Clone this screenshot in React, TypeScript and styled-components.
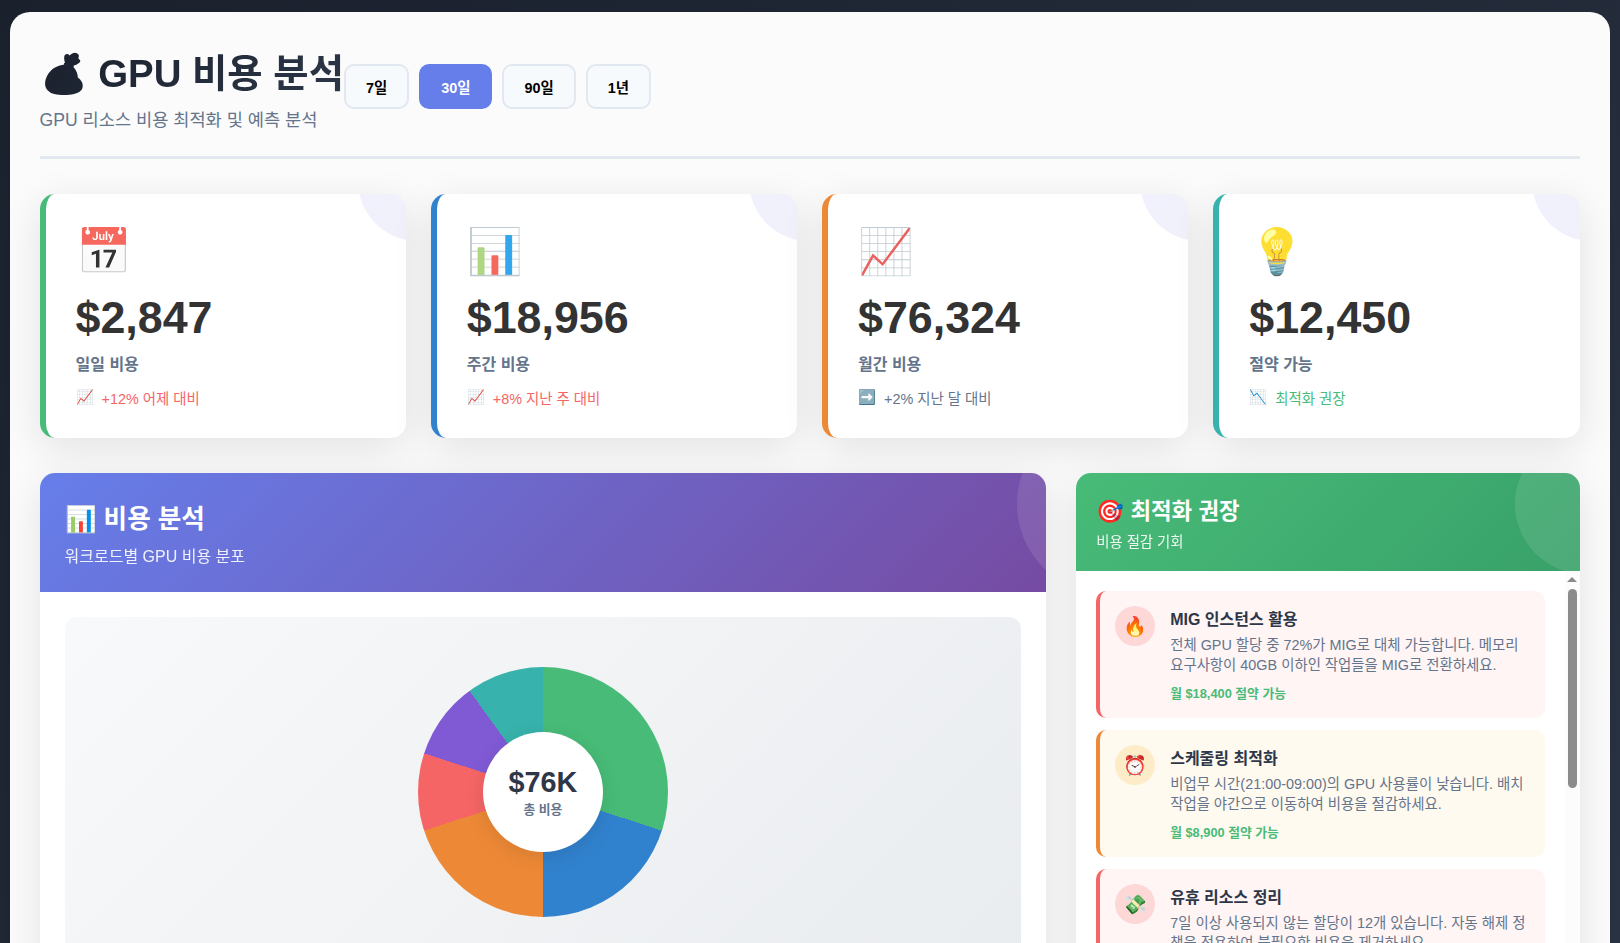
import React from "react";
import styled, { createGlobalStyle, css } from "styled-components";

const GlobalStyle = createGlobalStyle`
  * { margin: 0; padding: 0; box-sizing: border-box; }
  html, body { height: 943px; overflow: hidden; }
  body {
    font-family: "Liberation Sans", "Noto Sans CJK KR", sans-serif;
    color: #333;
    background: linear-gradient(135deg, #1a202c 0%, #2d3748 100%) 0 0 / 1620px 1600px no-repeat;
  }
`;

const Page = styled.main`
  width: 1600px;
  height: 1400px;
  margin: 12px 0 0 9.5px;
  padding: 30px;
  border-radius: 20px;
  background: #fbfbfb;
`;

const Header = styled.header`
  display: flex;
  align-items: center;
  height: 117px;
  padding-bottom: 26px;
  margin-bottom: 35px;
  border-bottom: 3px solid #e2e8f0;
`;

const Heading = styled.div`
  padding-top: 7px;
`;

const Title = styled.h1`
  font-size: 38.4px;
  line-height: 55px;
  font-weight: 700;
  color: transparent;
  background: linear-gradient(135deg, #1a202c, #2d3748);
  background-clip: text;
  -webkit-background-clip: text;
`;

const Subtitle = styled.p`
  margin-top: 6px;
  font-size: 17.6px;
  line-height: 26px;
  color: #64748b;
`;

const Periods = styled.nav`
  display: flex;
  gap: 10px;
`;

const PeriodButton = styled.button<{ $active?: boolean }>`
  padding: 10px 20px;
  border: 2px solid ${(p) => (p.$active ? "#667eea" : "#e2e8f0")};
  border-radius: 10px;
  background: ${(p) => (p.$active ? "#667eea" : "#f7fafc")};
  color: ${(p) => (p.$active ? "#fff" : "#000")};
  font-family: inherit;
  font-size: 14.4px;
  font-weight: 600;
`;

const Stats = styled.section`
  display: grid;
  grid-template-columns: repeat(4, 1fr);
  gap: 25px;
  margin-bottom: 35px;
`;

const StatCard = styled.article<{ $accent: string }>`
  position: relative;
  overflow: hidden;
  height: 244px;
  padding: 30px;
  border-left: 6px solid ${(p) => p.$accent};
  border-radius: 15px;
  background: #fff;
  box-shadow: 0 10px 40px rgba(0, 0, 0, 0.1);
  &::before {
    content: "";
    position: absolute;
    top: -30%;
    right: -20%;
    width: 120px;
    height: 120px;
    border-radius: 50%;
    background: linear-gradient(135deg, #667eea, #7462d0);
    opacity: 0.1;
  }
`;

const StatIcon = styled.div`
  font-size: 44.8px;
  line-height: 54px;
  margin-bottom: 14px;
  opacity: 0.8;
`;

const StatValue = styled.div`
  font-size: 44.8px;
  line-height: 51px;
  font-weight: 700;
  margin-bottom: 10px;
`;

const StatLabel = styled.div`
  font-size: 16px;
  line-height: 23px;
  font-weight: 600;
  color: #64748b;
  margin-bottom: 13px;
`;

const StatTrend = styled.div<{ $color: string }>`
  display: flex;
  align-items: center;
  gap: 8px;
  height: 21px;
  font-size: 14.4px;
  line-height: 21px;
  color: ${(p) => p.$color};
`;

const TrendMark = styled.span`
  margin-bottom: 4px;
`;

const Columns = styled.section`
  display: grid;
  grid-template-columns: 2fr 1fr;
  gap: 30px;
`;

const Panel = styled.section`
  overflow: hidden;
  height: 800px;
  border-radius: 15px;
  background: #fff;
  box-shadow: 0 10px 40px rgba(0, 0, 0, 0.1);
`;

const PanelHeader = styled.header<{ $compact?: boolean }>`
  position: relative;
  overflow: hidden;
  color: #fff;
  ${(p) =>
    p.$compact
      ? css`height: 98px; padding: 22px 20px 0; background: linear-gradient(135deg, #48bb78, #38a169);`
      : css`height: 119px; padding: 27px 25px 0; background: linear-gradient(135deg, #667eea, #764ba2);`}
  &::before {
    content: "";
    position: absolute;
    top: ${(p) => (p.$compact ? "-40%" : "-50%")};
    right: -15%;
    width: ${(p) => (p.$compact ? 140 : 180)}px;
    height: ${(p) => (p.$compact ? 140 : 180)}px;
    border-radius: 50%;
    background: rgba(255, 255, 255, 0.1);
  }
`;

const PanelTitle = styled.h2<{ $compact?: boolean }>`
  font-size: ${(p) => (p.$compact ? "22.4px" : "25.6px")};
  line-height: ${(p) => (p.$compact ? "33px" : "38px")};
  margin-bottom: ${(p) => (p.$compact ? "4px" : "7px")};
  font-weight: 700;
`;

const PanelNote = styled.p<{ $compact?: boolean }>`
  font-size: ${(p) => (p.$compact ? "14.4px" : "16px")};
  line-height: ${(p) => (p.$compact ? "21px" : "23px")};
  opacity: 0.9;
`;

const ChartArea = styled.div`
  display: flex;
  align-items: center;
  justify-content: center;
  height: 350px;
  margin: 25px;
  border-radius: 12px;
  background: linear-gradient(135deg, #f8f9fa, #e9ecef);
`;

const Donut = styled.div`
  display: flex;
  align-items: center;
  justify-content: center;
  width: 250px;
  height: 250px;
  border-radius: 50%;
  background: conic-gradient(
    #48bb78 0deg 108deg,
    #3182ce 108deg 180deg,
    #ed8936 180deg 252deg,
    #f56565 252deg 288deg,
    #805ad5 288deg 324deg,
    #38b2ac 324deg 360deg
  );
`;

const DonutHole = styled.div`
  display: flex;
  flex-direction: column;
  align-items: center;
  justify-content: center;
  width: 120px;
  height: 120px;
  padding-top: 2px;
  border-radius: 50%;
  background: #fff;
  box-shadow: 0 5px 20px rgba(0, 0, 0, 0.1);
`;

const Total = styled.strong`
  font-size: 28.8px;
  line-height: 33px;
  color: #2d3748;
`;

const TotalLabel = styled.span`
  font-size: 12.8px;
  line-height: 21px;
  font-weight: 600;
  color: #64748b;
`;

const TipScroller = styled.div`
  display: flex;
  height: 500px;
`;

const TipList = styled.div`
  flex: 1;
  display: flex;
  flex-direction: column;
  gap: 12px;
  padding: 20px;
`;

const Tip = styled.article<{ $critical?: boolean }>`
  display: flex;
  align-items: flex-start;
  gap: 15px;
  height: 127px;
  padding: 15px;
  border-left: 4px solid ${(p) => (p.$critical ? "#f56565" : "#ed8936")};
  border-radius: 10px;
  background: ${(p) => (p.$critical ? "#fff5f5" : "#fffaf0")};
`;

const TipIcon = styled.div<{ $critical?: boolean }>`
  display: flex;
  flex: none;
  align-items: center;
  justify-content: center;
  width: 40px;
  height: 40px;
  border-radius: 50%;
  font-size: 19.2px;
  background: ${(p) => (p.$critical ? "#fed7d7" : "#feebc8")};
`;

const TipBody = styled.div`
  flex: 1;
  padding-top: 2px;
`;

const TipTitle = styled.h3`
  font-size: 16px;
  line-height: 24px;
  margin-bottom: 3px;
  color: #2d3748;
`;

const TipText = styled.p`
  font-size: 14.4px;
  line-height: 20px;
  margin-bottom: 9px;
  color: #64748b;
`;

const TipSaving = styled.div`
  font-size: 12.8px;
  line-height: 19px;
  font-weight: 700;
  color: #48bb78;
`;

const ScrollTrack = styled.div`
  display: flex;
  flex-direction: column;
  align-items: center;
  width: 15px;
  padding-top: 6px;
  background: #fcfcfc;
`;

const ScrollArrow = styled.div`
  border: 5px solid transparent;
  border-top: 0;
  border-bottom-color: #8b8b8b;
`;

const ScrollThumb = styled.div`
  width: 9px;
  height: 199px;
  margin-top: 7px;
  border-radius: 5px;
  background: #8b8b8b;
`;

const periods = ["7일", "30일", "90일", "1년"];

const stats = [
  { icon: "📅", value: "$2,847", label: "일일 비용", mark: "📈", trend: "+12% 어제 대비", color: "#f56565", accent: "#48bb78" },
  { icon: "📊", value: "$18,956", label: "주간 비용", mark: "📈", trend: "+8% 지난 주 대비", color: "#f56565", accent: "#3182ce" },
  { icon: "📈", value: "$76,324", label: "월간 비용", mark: "➡️", trend: "+2% 지난 달 대비", color: "#64748b", accent: "#ed8936" },
  { icon: "💡", value: "$12,450", label: "절약 가능", mark: "📉", trend: "최적화 권장", color: "#48bb78", accent: "#38b2ac" },
];

const tips = [
  { icon: "🔥", critical: true, title: "MIG 인스턴스 활용", text: "전체 GPU 할당 중 72%가 MIG로 대체 가능합니다. 메모리 요구사항이 40GB 이하인 작업들을 MIG로 전환하세요.", saving: "월 $18,400 절약 가능" },
  { icon: "⏰", critical: false, title: "스케줄링 최적화", text: "비업무 시간(21:00-09:00)의 GPU 사용률이 낮습니다. 배치 작업을 야간으로 이동하여 비용을 절감하세요.", saving: "월 $8,900 절약 가능" },
  { icon: "💸", critical: true, title: "유휴 리소스 정리", text: "7일 이상 사용되지 않는 할당이 12개 있습니다. 자동 해제 정책을 적용하여 불필요한 비용을 제거하세요.", saving: "" },
];

export default function App() {
  return (
    <>
      <GlobalStyle />
      <Page>
        <Header>
          <Heading>
            <Title>💰 GPU 비용 분석</Title>
            <Subtitle>GPU 리소스 비용 최적화 및 예측 분석</Subtitle>
          </Heading>
          <Periods>
            {periods.map((p) => (
              <PeriodButton key={p} $active={p === "30일"}>{p}</PeriodButton>
            ))}
          </Periods>
        </Header>
        <Stats>
          {stats.map((s) => (
            <StatCard key={s.label} $accent={s.accent}>
              <StatIcon>{s.icon}</StatIcon>
              <StatValue>{s.value}</StatValue>
              <StatLabel>{s.label}</StatLabel>
              <StatTrend $color={s.color}>
                <TrendMark>{s.mark}</TrendMark>
                <span>{s.trend}</span>
              </StatTrend>
            </StatCard>
          ))}
        </Stats>
        <Columns>
          <Panel>
            <PanelHeader>
              <PanelTitle>📊 비용 분석</PanelTitle>
              <PanelNote>워크로드별 GPU 비용 분포</PanelNote>
            </PanelHeader>
            <ChartArea>
              <Donut>
                <DonutHole>
                  <Total>$76K</Total>
                  <TotalLabel>총 비용</TotalLabel>
                </DonutHole>
              </Donut>
            </ChartArea>
          </Panel>
          <Panel>
            <PanelHeader $compact>
              <PanelTitle $compact>🎯 최적화 권장</PanelTitle>
              <PanelNote $compact>비용 절감 기회</PanelNote>
            </PanelHeader>
            <TipScroller>
              <TipList>
                {tips.map((t) => (
                  <Tip key={t.title} $critical={t.critical}>
                    <TipIcon $critical={t.critical}>{t.icon}</TipIcon>
                    <TipBody>
                      <TipTitle>{t.title}</TipTitle>
                      <TipText>{t.text}</TipText>
                      {t.saving && <TipSaving>{t.saving}</TipSaving>}
                    </TipBody>
                  </Tip>
                ))}
              </TipList>
              <ScrollTrack>
                <ScrollArrow />
                <ScrollThumb />
              </ScrollTrack>
            </TipScroller>
          </Panel>
        </Columns>
      </Page>
    </>
  );
}
